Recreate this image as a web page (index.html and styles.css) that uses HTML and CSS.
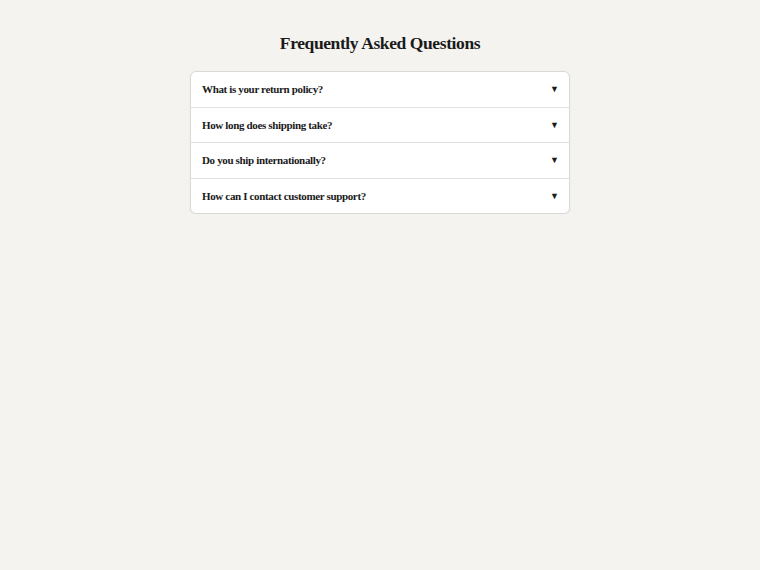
FILE: index.html
```html
<!DOCTYPE html>
<html lang="en">
<head>
<meta charset="utf-8">
<title>FAQ</title>
<link rel="stylesheet" href="styles.css">
</head>
<body>
<main class="page">
  <h1 class="title">Frequently Asked Questions</h1>
  <div class="faq">
    <div class="faq-item"><span class="q">What is your return policy?</span><span class="arrow">▼</span></div>
    <div class="faq-item"><span class="q">How long does shipping take?</span><span class="arrow">▼</span></div>
    <div class="faq-item"><span class="q">Do you ship internationally?</span><span class="arrow">▼</span></div>
    <div class="faq-item"><span class="q">How can I contact customer support?</span><span class="arrow">▼</span></div>
  </div>
</main>
</body>
</html>
```
FILE: styles.css
```css
html, body {
  margin: 0;
  padding: 0;
  background: #f4f3ef;
}
body {
  font-family: "Liberation Serif", "Times New Roman", serif;
  color: #1a1a1a;
}
.page {
  padding-top: 31px;
  display: flex;
  flex-direction: column;
  align-items: center;
}
.title {
  margin: 0 0 16px;
  font-size: 17.5px;
  letter-spacing: -0.4px;
  line-height: 24px;
  font-weight: bold;
}
.faq {
  width: 378px;
  background: #fff;
  border: 1px solid #d9d9d6;
  border-radius: 6px;
  box-shadow: 0 1px 3px rgba(0,0,0,0.05);
  overflow: hidden;
}
.faq-item {
  display: flex;
  justify-content: space-between;
  align-items: center;
  padding: 0 10px 0 11px;
  height: 34.5px;
  border-bottom: 1px solid #e2e2df;
  font-size: 11px;
  letter-spacing: -0.35px;
  font-weight: bold;
}
.faq-item:last-child {
  border-bottom: none;
}
.arrow {
  font-size: 9px;
  letter-spacing: 0;
}
```
